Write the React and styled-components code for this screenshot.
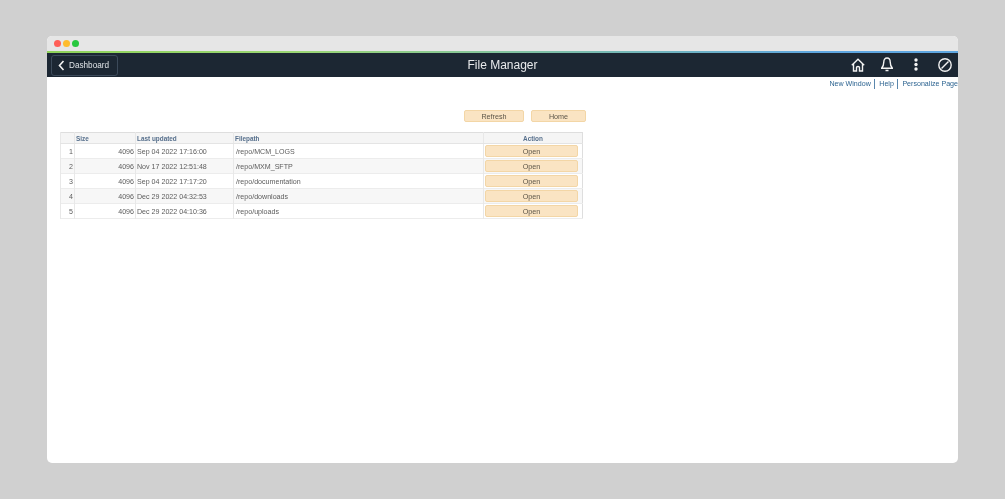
import React from 'react';
import styled, { createGlobalStyle } from 'styled-components';

const GlobalStyle = createGlobalStyle`
  html, body {
    margin: 0;
    padding: 0;
    background: #d0d0d0;
    font-family: "Liberation Sans", Arial, sans-serif;
  }
`;

const Page = styled.div`
  width: 1005px;
  height: 499px;
  padding: 36px 47px;
  box-sizing: border-box;
  overflow: hidden;
`;

const Window = styled.div`
  width: 911px;
  height: 427px;
  background: #fff;
  border-radius: 5px;
  overflow: hidden;
  will-change: opacity;
`;

const TitleBar = styled.div`
  height: 14.500px;
  background: #e6e6e6;
  display: flex;
  align-items: center;
  gap: 2px;
  padding: 0 0 0 6.500px;
  box-sizing: border-box;
`;

const Dot = styled.span`
  width: 7px;
  height: 7px;
  border-radius: 50%;
  background: ${(p) => p.$color};
`;

const Stripe = styled.div`
  height: 2.500px;
  background: linear-gradient(90deg, #8fd35a 0%, #9bd675 28%, #5ea6e0 85%, #5ea6e0 100%);
`;

const Header = styled.header`
  height: 24px;
  background: #1c2733;
  display: grid;
  grid-template-columns: 1fr auto 1fr;
  align-items: center;
`;

const BackButton = styled.button`
  justify-self: start;
  margin-left: 4px;
  width: 67px;
  height: 21px;
  background: transparent;
  border: 1px solid #3c4a5a;
  border-radius: 3px;
  color: #dfe3e7;
  font: 8.200px "Liberation Sans", Arial, sans-serif;
  display: flex;
  align-items: center;
  gap: 4px;
  padding: 0 0 0 6px;
  box-sizing: border-box;
`;

const Title = styled.h1`
  margin: 0 0 1px;
  color: #e8eaec;
  font-size: 12px;
  font-weight: 400;
`;

const HeaderIcons = styled.div`
  justify-self: end;
  display: flex;
  align-items: center;
  gap: 14px;
  padding: 0 5.500px 1px 0;
`;

const IconSlot = styled.span`
  width: 15px;
  height: 15px;
  display: flex;
  align-items: center;
  justify-content: center;
`;

const LinksRow = styled.nav`
  height: 13px;
  display: flex;
  justify-content: flex-end;
  align-items: center;
  font-size: 7.100px;
  color: #2d6491;
  white-space: nowrap;
`;

const LinkItem = styled.a`
  color: #2d6491;
  padding: 0 3.500px 0 4px;
  line-height: 10px;
  border-left: ${(p) => (p.$divided ? '1px solid #5a87ad' : 'none')};
  &:last-child { padding-right: 0; }
`;

const Actions = styled.div`
  display: flex;
  gap: 7px;
  margin: 20px 0 0 417px;
`;

const ActionButton = styled.button`
  width: ${(p) => p.$width}px;
  height: ${(p) => p.$height}px;
  background: #fae4c3;
  border: 1px solid #f3d6a6;
  border-radius: 2px;
  color: #5c5548;
  font: 7.200px "Liberation Sans", Arial, sans-serif;
  padding: 0;
  display: block;
`;

const FileTable = styled.table`
  margin: 10px 0 0 13px;
  width: 523px;
  border-collapse: collapse;
  table-layout: fixed;
  border: 1px solid #dedede;
  font-size: 7.100px;
  color: #5c5c5c;
`;

const HeadCell = styled.th`
  height: 10px;
  padding: 0 1px;
  background: #f5f5f5;
  border-bottom: 1px solid #e4e4e4;
  border-left: 1px solid #e8e8e8;
  color: #566f8c;
  font-size: 6.400px;
  font-weight: 700;
  text-align: ${(p) => p.$align || 'left'};
`;

const Row = styled.tr`
  background: ${(p) => (p.$alt ? '#f7f7f7' : '#fff')};
  border-bottom: 1px solid #ececec;
`;

const Cell = styled.td`
  height: 13px;
  padding: 1px 1px 0;
  border-left: 1px solid #e8e8e8;
  text-align: ${(p) => p.$align || 'left'};
  white-space: nowrap;
`;

const PathCell = styled(Cell)`
  padding-left: 2px;
`;

const ActionCell = styled(Cell)`
  height: 14px;
  padding: 0 0 0 1px;
`;

const HomeIcon = () => (
  <svg width="14" height="14" viewBox="0 0 14 14" fill="none" stroke="#f2f2f2" strokeWidth="1.400">
    <path d="M.8 7.200 7 1.200l6.200 6" />
    <path d="M2.500 5.800V13H5.500V9.500Q5.500 8.500 7 8.500T8.500 9.500V13H11.500V5.800" />
  </svg>
);

const BellIcon = () => (
  <svg width="12" height="15" viewBox="0 0 12 15" fill="none" stroke="#f2f2f2" strokeWidth="1.400">
    <path d="M6 1C4 1 2.800 2.800 2.800 5c0 3-1 4.800-2.200 6.300h10.800C10.200 9.800 9.200 8 9.200 5 9.200 2.800 8 1 6 1Z" />
    <path d="M4.500 13.500h3" />
  </svg>
);

const DotsIcon = () => (
  <svg width="4" height="13" viewBox="0 0 4 13" fill="#f2f2f2">
    <circle cx="2" cy="2" r="1.700" />
    <circle cx="2" cy="6.500" r="1.700" />
    <circle cx="2" cy="11" r="1.700" />
  </svg>
);

const BlockedIcon = () => (
  <svg width="14" height="14" viewBox="0 0 14 14" fill="none" stroke="#f2f2f2" strokeWidth="1.400">
    <circle cx="7" cy="7" r="6.200" />
    <path d="M3.500 10.500 10.500 3.500" />
  </svg>
);

const files = [
  ['4096', 'Sep 04 2022 17:16:00', '/repo/MCM_LOGS'],
  ['4096', 'Nov 17 2022 12:51:48', '/repo/MXM_SFTP'],
  ['4096', 'Sep 04 2022 17:17:20', '/repo/documentation'],
  ['4096', 'Dec 29 2022 04:32:53', '/repo/downloads'],
  ['4096', 'Dec 29 2022 04:10:36', '/repo/uploads'],
];

export default function App() {
  return (
    <Page>
      <GlobalStyle />
      <Window>
        <TitleBar>
          <Dot $color="#ff5f57" />
          <Dot $color="#febc2e" />
          <Dot $color="#28c840" />
        </TitleBar>
        <Stripe />
        <Header>
          <BackButton>
            <svg width="7" height="11" viewBox="0 0 7 11" fill="none" stroke="#f2f2f2" strokeWidth="1.600">
              <path d="M5.500 1 1.500 5.500l4 4.500" />
            </svg>
            Dashboard
          </BackButton>
          <Title>File Manager</Title>
          <HeaderIcons>
            <IconSlot><HomeIcon /></IconSlot>
            <IconSlot><BellIcon /></IconSlot>
            <IconSlot><DotsIcon /></IconSlot>
            <IconSlot><BlockedIcon /></IconSlot>
          </HeaderIcons>
        </Header>
        <LinksRow>
          <LinkItem>New Window</LinkItem>
          <LinkItem $divided>Help</LinkItem>
          <LinkItem $divided>Personalize Page</LinkItem>
        </LinksRow>
        <Actions>
          <ActionButton $width={60} $height={12}>Refresh</ActionButton>
          <ActionButton $width={55} $height={12}>Home</ActionButton>
        </Actions>
        <FileTable>
          <colgroup>
            <col style={{ width: 14 }} />
            <col style={{ width: 61 }} />
            <col style={{ width: 98 }} />
            <col style={{ width: 250 }} />
            <col style={{ width: 99 }} />
          </colgroup>
          <thead>
            <tr>
              <HeadCell />
              <HeadCell>Size</HeadCell>
              <HeadCell>Last updated</HeadCell>
              <HeadCell>Filepath</HeadCell>
              <HeadCell $align="center">Action</HeadCell>
            </tr>
          </thead>
          <tbody>
            {files.map((file, i) => (
              <Row key={file[2]} $alt={i % 2 === 1}>
                <Cell $align="right">{i + 1}</Cell>
                <Cell $align="right">{file[0]}</Cell>
                <Cell>{file[1]}</Cell>
                <PathCell>{file[2]}</PathCell>
                <ActionCell>
                  <ActionButton $width={93} $height={12}>Open</ActionButton>
                </ActionCell>
              </Row>
            ))}
          </tbody>
        </FileTable>
      </Window>
    </Page>
  );
}
